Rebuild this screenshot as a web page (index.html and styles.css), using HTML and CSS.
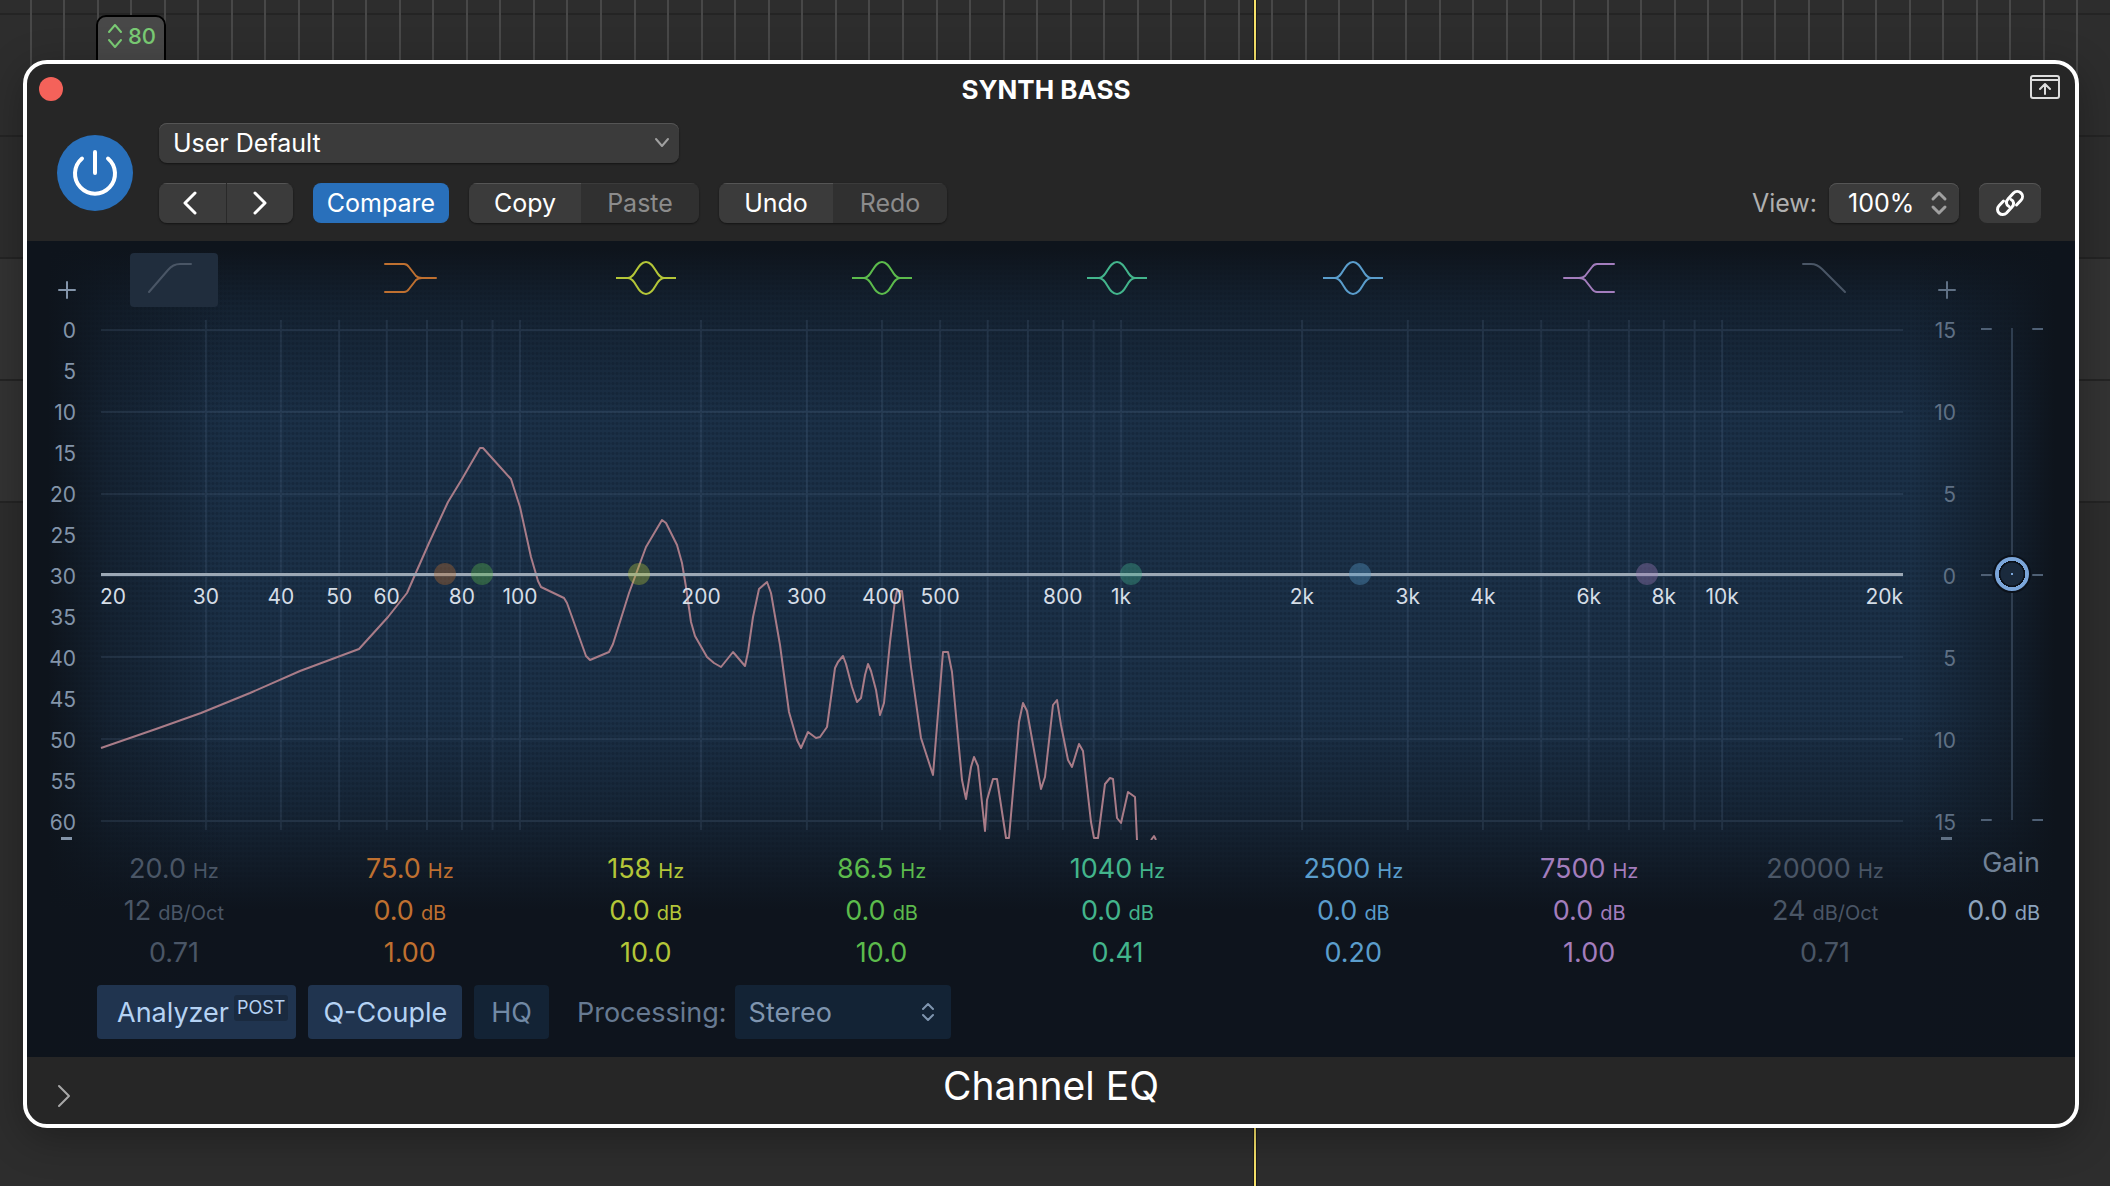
FILE: index.html
```html
<!DOCTYPE html>
<html lang="en">
<head>
  <meta charset="UTF-8" />
  <meta name="viewport" content="width=device-width, initial-scale=1" />
  <title>Channel EQ</title>
  <link rel="stylesheet" href="styles.css">
</head>
<body>

  <div class="timeline"></div>
  <div class="playhead"></div>
  <div class="tempo-tag">
    <svg width="18" height="28" viewBox="0 0 18 28"><path d="M3 10l6-7 6 7M3 18l6 7 6-7"/></svg>
    <span>80</span>
  </div>

  <main class="plugin">
    <header class="plugin-header">
      <div class="title-bar">
        <button class="close" aria-label="Close"></button>
        <h1>SYNTH BASS</h1>
        <button class="icon-button" aria-label="Float window">
          <svg width="32" height="26" viewBox="0 0 32 26"><rect x="2" y="2" width="28" height="22" rx="2"/><path d="M2 6h28M16 20v-9M11 15l5-5 5 5"/></svg>
        </button>
      </div>

      <div class="toolbar">
        <button class="power" aria-label="Power">
          <svg width="48" height="48" viewBox="0 0 48 48"><path d="M24 3v21M11 9.500a20 20 0 1 0 26 0"/></svg>
        </button>
        <div class="toolbar-rows">
          <div class="select-box preset">
            <select aria-label="Preset">
              <option>User Default</option>
            </select>
            <svg width="16" height="12" viewBox="0 0 16 12"><path d="M2 2l6 7 6-7"/></svg>
          </div>
          <div class="button-row">
            <div class="group nav">
              <button aria-label="Previous"><svg width="14" height="26" viewBox="0 0 14 26"><path d="M12 3L2 13l10 10"/></svg></button>
              <button aria-label="Next"><svg width="14" height="26" viewBox="0 0 14 26"><path d="M2 3l10 10L2 23"/></svg></button>
            </div>
            <button class="compare">Compare</button>
            <div class="group copy">
              <button>Copy</button>
              <button disabled>Paste</button>
            </div>
            <div class="group">
              <button>Undo</button>
              <button disabled>Redo</button>
            </div>
            <label class="view-label" for="view">View:</label>
            <div class="select-box view">
              <select id="view">
                <option>100%</option>
              </select>
              <svg width="18" height="26" viewBox="0 0 18 26"><path d="M3 9l6-6 6 6M3 17l6 6 6-6"/></svg>
            </div>
            <button class="link" aria-label="Link">
              <svg width="30" height="30" viewBox="0 0 30 30"><path d="M14 18.500c-3-1.500-3.500-5-1-7.500l5.500-6a5.200 5.200 0 0 1 7.500 7.300l-4.500 4.700"/><path d="M16 11.500c3 1.500 3.500 5 1 7.500l-5.500 6a5.200 5.200 0 0 1-7.500-7.300l4.500-4.700"/></svg>
            </button>
          </div>
        </div>
      </div>
    </header>

    <section class="screen">
      <div class="bands" id="bandIcons"></div>

      <div class="scale scale-left">
        <button aria-label="Increase analyzer range"><svg width="18" height="18" viewBox="0 0 18 18"><path d="M9 1v16M1 9h16"/></svg></button>
        <ul>
          <li>0</li><li>5</li><li>10</li><li>15</li><li>20</li><li>25</li><li>30</li>
          <li>35</li><li>40</li><li>45</li><li>50</li><li>55</li><li>60</li>
        </ul>
        <button class="minus" aria-label="Decrease analyzer range"></button>
      </div>

      <div class="graph" id="graph">
        <svg viewBox="100 320 1803 520" preserveAspectRatio="none">
          <g class="grid" id="gridLines"></g>
          <path class="spectrum" d="M101 748L156 729 201 713 250 693 300 671 359 649 388 617 407 593 429 543 448 502 462 479 480 448 483 448 511 479 520 507 531 557 538 581 541 587 564 598 567 603 586 656 590 660 609 652 613 644 629 593 646 547 662 520 666 523 677 545 682 563 686 587 691 622 695 636 707 657 714 663 721 667 733 652 745 666 748 652 753 617 759 589 767 582 771 593 780 645 789 712 797 740 801 748 808 732 816 738 820 737 827 727 835 668 838 662 843 656 846 664 852 687 857 702 861 698 865 675 868 664 871 671 876 690 880 715 884 703 890 642 895 600 897 591 902 591 911 667 921 738 933 775 943 652 948 652 952 672 959 748 962 780 966 799 971 767 974 757 978 766 985 831 987 800 993 779 997 779 1006 838 1009 838 1019 722 1023 703 1027 711 1041 789 1045 777 1053 705 1057 700 1061 725 1068 760 1072 767 1079 744 1083 751 1091 822 1094 838 1098 838 1105 784 1110 778 1113 779 1117 818 1121 823 1128 792 1135 797 1137 840M1151 840L1154 836 1156 840"/>
          <path class="eq-line" d="M101 574.500H1903"/>
        </svg>
      </div>

      <div class="scale scale-right">
        <button aria-label="Increase gain range"><svg width="18" height="18" viewBox="0 0 18 18"><path d="M9 1v16M1 9h16"/></svg></button>
        <ul>
          <li>15</li><li>10</li><li>5</li><li>0</li><li>5</li><li>10</li><li>15</li>
        </ul>
        <button class="minus" aria-label="Decrease gain range"></button>
      </div>

      <div class="gain-slider">
        <svg width="62" height="494" viewBox="0 0 62 494"><path d="M0 2h10M52 2h10M0 248h10M52 248h10M0 493h10M52 493h10"/></svg>
        <input type="range" id="gain" min="-15" max="15" value="0">
      </div>

      <div class="bands values" id="bandValues"></div>

      <div class="gain-value">
        <label for="gain">Gain</label>
        <output for="gain">0.0<small>dB</small></output>
      </div>

      <div class="options">
        <button class="option analyzer on">Analyzer <span class="badge">POST</span></button>
        <button class="option on">Q-Couple</button>
        <button class="option hq">HQ</button>
        <label for="processing">Processing:</label>
        <div class="select-box processing">
          <select id="processing">
            <option>Stereo</option>
          </select>
          <svg width="14" height="20" viewBox="0 0 14 20"><path d="M2 7l5-5 5 5M2 13l5 5 5-5"/></svg>
        </div>
      </div>
    </section>

    <footer class="plugin-footer">
      <button class="disclose" aria-label="Show more"><svg width="14" height="24" viewBox="0 0 14 24"><path d="M2 2l10 10L2 22"/></svg></button>
      <h2>Channel EQ</h2>
    </footer>
  </main>

  <script>
    const shapes = {
      lowcut: 'M5 34L24 12Q29 6 36 6H47',
      lowshelf: 'M5 6H24Q27 6 29 9L36 18Q38 20 42 20H56M5 34H24Q27 34 29 31L36 22Q38 20 42 20',
      bell: 'M0 20H12C20 20 21 4 30 4S40 20 48 20H60M12 20C20 20 21 36 30 36S40 20 48 20',
      highshelf: 'M55 6H38Q35 6 33 9L26 18Q24 20 20 20H5M55 34H38Q35 34 33 31L26 22Q24 20 20 20',
      highcut: 'M8 6H16Q22 6 27 11L50 34'
    };

    const bands = [
      { shape: 'lowcut', color: 'off', freq: '20.0', gain: '12', unit: 'dB/Oct', q: '0.71' },
      { shape: 'lowshelf', color: 'orange', freq: '75.0', gain: '0.0', unit: 'dB', q: '1.00' },
      { shape: 'bell', color: 'yellow', freq: '158', gain: '0.0', unit: 'dB', q: '10.0' },
      { shape: 'bell', color: 'green', freq: '86.5', gain: '0.0', unit: 'dB', q: '10.0' },
      { shape: 'bell', color: 'teal', freq: '1040', gain: '0.0', unit: 'dB', q: '0.41' },
      { shape: 'bell', color: 'blue', freq: '2500', gain: '0.0', unit: 'dB', q: '0.20' },
      { shape: 'highshelf', color: 'purple', freq: '7500', gain: '0.0', unit: 'dB', q: '1.00' },
      { shape: 'highcut', color: 'off', freq: '20000', gain: '24', unit: 'dB/Oct', q: '0.71' }
    ];

    const graph = document.getElementById('graph');

    // Position on the log frequency axis, 0 to 1 (20 Hz - 20 kHz)
    function freqPos(hz) {
      return Math.log10(hz / 20) / 3;
    }

    // Band icons and values
    bands.forEach((band, i) => {
      document.getElementById('bandIcons').innerHTML += `
        <button class="band ${band.color} ${i === 0 ? 'selected' : ''}" aria-label="Band ${i + 1}">
          <svg width="60" height="40" viewBox="0 0 60 40"><path d="${shapes[band.shape]}"/></svg>
        </button>`;
      document.getElementById('bandValues').innerHTML += `
        <div class="band-values ${band.color}">
          <div>${band.freq}<small>Hz</small></div>
          <div>${band.gain}<small>${band.unit}</small></div>
          <div>${band.q}</div>
        </div>`;

      if (band.color !== 'off') {
        graph.insertAdjacentHTML('beforeend',
          `<span class="node ${band.color}" style="left: ${freqPos(band.freq) * 100}%"></span>`);
      }
    });

    // Grid lines
    let lines = '';
    for (let decade = 10; decade <= 10000; decade *= 10) {
      for (let n = 1; n < 10; n++) {
        const hz = decade * n;
        if (hz > 20 && hz <= 10000) {
          lines += `M${100 + freqPos(hz) * 1803} 320V830`;
        }
      }
    }
    for (let i = 0; i < 7; i++) {
      lines += `M101 ${330 + i * 82 - (i > 3 ? 1 : 0)}H1903`;
    }
    document.getElementById('gridLines').innerHTML = `<path d="${lines}"/>`;

    // Frequency labels
    [20, 30, 40, 50, 60, 80, 100, 200, 300, 400, 500, 800, 1000, 2000, 3000, 4000, 6000, 8000, 10000, 20000].forEach(hz => {
      const text = hz >= 1000 ? hz / 1000 + 'k' : hz;
      const edge = hz === 20 ? 'first' : hz === 20000 ? 'last' : '';
      graph.insertAdjacentHTML('beforeend',
        `<span class="freq ${edge}" style="left: ${freqPos(hz) * 100}%">${text}</span>`);
    });
  </script>
</body>
</html>
```
FILE: styles.css
```css
* {
  box-sizing: border-box;
}
body {
  margin: 0;
  min-height: 100vh;
  padding: 60px 31px 58px 23px;
  position: relative;
  overflow: hidden;
  display: flex;
  flex-direction: column;
  font-family: Inter, "Liberation Sans", sans-serif;
  font-size: 25px;
  color: #fff;
  background:
    linear-gradient(#242424, #242424) 0 13px / 100% 2px no-repeat,
    linear-gradient(#242424, #242424) 0 135px / 100% 2px no-repeat,
    linear-gradient(#242424, #242424) 0 257px / 100% 2px no-repeat,
    linear-gradient(#242424, #242424) 0 379px / 100% 2px no-repeat,
    linear-gradient(#242424, #242424) 0 501px / 100% 2px no-repeat,
    linear-gradient(#333, #333) 0 257px / 100% 245px no-repeat,
    #2d2d2d;
}
button, select, input {
  font: inherit;
  color: inherit;
  margin: 0;
  padding: 0;
  border: none;
  background: none;
}
svg {
  display: block;
  fill: none;
  stroke: currentColor;
  stroke-width: 2;
  stroke-linecap: round;
  stroke-linejoin: round;
}

/* Arrangement behind the window */
.timeline {
  position: absolute;
  top: 0;
  left: -4px;
  right: 0;
  height: 80px;
  background: repeating-linear-gradient(90deg, #484848 0 2px, transparent 2px calc(100% / 63));
}
.playhead {
  position: absolute;
  top: 0;
  bottom: 0;
  left: 59.4%;
  width: 4px;
  background: #f5e068;
  border: 1px solid #1c1c1c;
  border-width: 0 1px;
}
.tempo-tag {
  position: absolute;
  top: 15px;
  left: 96px;
  width: 70px;
  height: 60px;
  padding-top: 5px;
  display: flex;
  justify-content: center;
  align-items: flex-start;
  gap: 4px;
  border: 2px solid #000;
  border-radius: 10px;
  background: #484848;
  color: #7acb74;
  font-size: 22px;
  font-weight: 500;
  line-height: 28px;
}

/* Window */
.plugin {
  position: relative;
  flex: 1;
  display: flex;
  flex-direction: column;
  border: 4px solid #fff;
  border-radius: 24px;
  overflow: hidden;
  background: #262626;
  box-shadow: 0 10px 40px rgba(0,0,0,0.3);
}
.title-bar {
  display: flex;
  justify-content: space-between;
  align-items: center;
  height: 50px;
  padding: 0 14px 0 12px;
}
.title-bar h1 {
  margin: 0;
  font-size: 26px;
  font-weight: 700;
}
.close {
  width: 24px;
  height: 24px;
  border-radius: 50%;
  background: #f4625a;
}
.icon-button {
  color: #ddd;
  margin-bottom: 4px;
}
.toolbar {
  display: flex;
  align-items: center;
  gap: 26px;
  height: 127px;
  padding: 0 34px 9px 30px;
}
.power {
  display: grid;
  place-items: center;
  flex: none;
  width: 76px;
  height: 76px;
  border-radius: 50%;
  background: #2970bb;
}
.power svg {
  stroke-width: 4;
}
.toolbar-rows {
  flex: 1;
  display: flex;
  flex-direction: column;
  gap: 20px;
}
.button-row {
  display: flex;
  align-items: center;
  gap: 20px;
}
.select-box {
  display: grid;
  align-items: center;
  height: 40px;
  border-radius: 8px;
  background: #3b3b3b;
  box-shadow: inset 0 1px #555, 0 1px 2px rgba(0,0,0,0.5);
}
.select-box select, .select-box svg {
  grid-area: 1 / 1;
}
.select-box select {
  appearance: none;
  width: 100%;
  height: 100%;
  padding-left: 14px;
}
.select-box svg {
  justify-self: end;
  margin-right: 9px;
  color: #a0a0a0;
  pointer-events: none;
}
.preset {
  width: 520px;
}
.group {
  display: flex;
  border-radius: 8px;
  overflow: hidden;
  box-shadow: 0 1px 2px rgba(0,0,0,0.5);
}
.group button, .link {
  display: grid;
  place-items: center;
  height: 40px;
  width: 114px;
  background: #3b3b3b;
  box-shadow: inset 0 1px #555;
}
.group.copy button:first-child {
  width: 112px;
}
.group.copy button:last-child {
  width: 118px;
}
.group button:disabled {
  background: #303030;
  color: #8c8c8c;
  box-shadow: inset 0 1px #3b3b3b;
}
.group.nav button {
  width: 67px;
}
.group.nav button:first-child {
  padding-right: 6px;
}
.group.nav button:last-child {
  border-left: 1px solid #292929;
}
.nav svg {
  stroke-width: 3;
}
.compare {
  width: 136px;
  height: 40px;
  border-radius: 8px;
  background: #2970bb;
}
.view-label {
  margin-left: auto;
  margin-right: -8px;
  color: #b0b0b0;
}
.view {
  width: 130px;
}
.view select {
  padding-left: 19px;
}
.view svg {
  margin-right: 11px;
  stroke-width: 3;
}
.link {
  width: 62px;
  border-radius: 8px;
}
.link svg {
  stroke-width: 3;
}

/* EQ display */
.screen {
  flex: 1;
  display: grid;
  grid-template-columns: 73px 1fr 53px 119px;
  grid-template-rows: 66px 541px 126px 1fr;
  background:
    linear-gradient(90deg, #0e141c 1%, rgba(14,20,28,0.5) 4%, transparent 10% 92%, rgba(14,20,28,0.6) 97%, #0e141c 99%),
    linear-gradient(#0e141c 1%, rgba(14,20,28,0.5) 8%, transparent 22% 58%, rgba(14,20,28,0.4) 70%, #0e141d 82%),
    radial-gradient(circle, #16283d 1px, transparent 2px) 0 0 / 4px 5px,
    #1b3047;
}
.bands {
  grid-row: 1;
  grid-column: 1 / -1;
  display: grid;
  grid-template-columns: repeat(8, 1fr);
  justify-items: center;
  padding: 12px 132px 0 29px;
}
.band {
  display: grid;
  place-items: center;
  width: 88px;
  height: 54px;
  padding-bottom: 4px;
  border-radius: 4px;
}
.band.selected {
  background: #202d3d;
}
.off { color: #4a5666; }
.orange { color: #bf7030; }
.yellow { color: #b4c638; }
.green { color: #5cbb4c; }
.teal { color: #43b58c; }
.blue { color: #5a9dcc; }
.purple { color: #a37dbd; }

.scale {
  grid-row: 1 / 3;
  display: flex;
  flex-direction: column;
  align-items: flex-end;
  padding-top: 40px;
  font-size: 21px;
  color: #8394a9;
}
.scale-left {
  grid-column: 1;
  padding-right: 24px;
}
.scale-right {
  grid-column: 3;
  color: #5f7084;
}
.scale ul {
  display: flex;
  flex-direction: column;
  justify-content: space-between;
  height: 518px;
  margin: 19px 0 1px;
  padding: 0;
  list-style: none;
  line-height: 26px;
}
.scale li {
  text-align: right;
}
.scale .minus {
  width: 11px;
  height: 3px;
  margin-right: 4px;
  background: currentColor;
}
.graph {
  grid-row: 2;
  grid-column: 2;
  position: relative;
  height: 520px;
  margin-top: 13px;
}
.graph svg {
  width: 100%;
  height: 520px;
  stroke-linecap: butt;
}
.graph path {
  vector-effect: non-scaling-stroke;
}
.grid {
  stroke: rgba(120,150,185,0.14);
}
.spectrum {
  stroke: #a97c88;
}
.eq-line {
  stroke: #9ca8b5;
  stroke-width: 3;
}
.node {
  position: absolute;
  top: 243px;
  width: 22px;
  height: 22px;
  border-radius: 50%;
  background: currentColor;
  opacity: 0.36;
  transform: translateX(-50%);
}
.freq {
  position: absolute;
  top: 264px;
  line-height: 26px;
  font-size: 21px;
  color: #d5dde6;
  transform: translateX(-50%);
}
.freq.first {
  transform: none;
}
.freq.last {
  transform: translateX(-100%);
}
.gain-slider {
  grid-row: 2;
  grid-column: 4;
  display: grid;
  place-items: center;
  align-content: start;
  padding: 4px 7px 0 0;
  color: #4f6075;
}
.gain-slider svg, .gain-slider input {
  grid-area: 1 / 1;
}
.gain-slider input {
  appearance: none;
  writing-mode: vertical-lr;
  direction: rtl;
  width: 36px;
  height: 526px;
  background: linear-gradient(#2f3e50, #2f3e50) center / 2px 492px no-repeat;
}
.gain-slider input::-webkit-slider-thumb {
  appearance: none;
  width: 38px;
  height: 38px;
  border: 2px solid #0b111a;
  border-radius: 50%;
  background: radial-gradient(circle, #7ba6da 0 1px, #1a2a3d 1px 11px, #0b111a 12px 13px, #7ba6da 13px);
}

.values {
  grid-row: 3;
  padding-top: 0;
  font-size: 27px;
  line-height: 42px;
  text-align: center;
}
small {
  margin-left: 7px;
  font-size: 20px;
  line-height: 1;
}
.gain-value {
  grid-row: 3;
  grid-column: 3 / 5;
  display: flex;
  flex-direction: column;
  gap: 6px;
  margin-top: -6px;
  padding-right: 35px;
  font-size: 27px;
  line-height: 42px;
  text-align: right;
  color: #8ca3bd;
}
.gain-value label {
  color: #718297;
}
.options {
  grid-row: 4;
  grid-column: 1 / -1;
  display: flex;
  align-items: center;
  align-self: start;
  gap: 12px;
  padding: 11px 70px 18px;
  font-size: 27px;
  color: #677a92;
}
.option {
  height: 54px;
  padding: 0 15px;
  border-radius: 4px;
  background: #132335;
  color: #7189a5;
}
.option.on {
  background: #20344f;
  color: #b5d2f3;
}
.option.hq {
  padding: 0 17px;
}
.option.analyzer {
  display: flex;
  align-items: center;
  gap: 5px;
  padding: 0 8px 0 20px;
}
.badge {
  margin-bottom: 8px;
  padding: 0 3px;
  border-radius: 3px;
  background: #1a2a3f;
  font-size: 18px;
  line-height: 26px;
}
.options label {
  margin-left: 16px;
  margin-right: -4px;
}
.processing {
  width: 216px;
  height: 54px;
  border-radius: 4px;
  background: #132335;
  box-shadow: none;
  color: #7f95af;
}
.processing svg {
  margin-right: 16px;
  color: #7f95af;
}

.plugin-footer {
  display: grid;
  grid-template-columns: 1fr auto 1fr;
  height: 67px;
}
.plugin-footer h2 {
  margin: 0;
  font-size: 39px;
  font-weight: 400;
  line-height: 58px;
}
.disclose {
  justify-self: start;
  margin: 10px 0 0 30px;
  color: #a8a8a8;
}
```
